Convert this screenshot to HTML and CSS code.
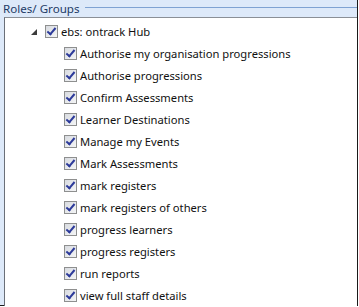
FILE: index.html
```html
<!DOCTYPE html>
<html lang="en">
<head>
  <meta charset="UTF-8">
  <title>Roles/ Groups</title>
  <link rel="stylesheet" href="styles.css">
</head>
<body>

<div class="group">
  <div class="group-head">
    <span class="group-title">Roles/ Groups</span>
    <span class="group-line"></span>
  </div>
  <div class="group-body">
    <ul class="tree">
      <li class="node parent">
        <span class="expander"></span>
        <span class="check"></span>
        <span class="label">ebs: ontrack Hub</span>
      </li>
      <li class="node"><span class="check"></span><span class="label">Authorise my organisation progressions</span></li>
      <li class="node"><span class="check"></span><span class="label">Authorise progressions</span></li>
      <li class="node"><span class="check"></span><span class="label">Confirm Assessments</span></li>
      <li class="node"><span class="check"></span><span class="label">Learner Destinations</span></li>
      <li class="node"><span class="check"></span><span class="label">Manage my Events</span></li>
      <li class="node"><span class="check"></span><span class="label">Mark Assessments</span></li>
      <li class="node"><span class="check"></span><span class="label">mark registers</span></li>
      <li class="node"><span class="check"></span><span class="label">mark registers of others</span></li>
      <li class="node"><span class="check"></span><span class="label">progress learners</span></li>
      <li class="node"><span class="check"></span><span class="label">progress registers</span></li>
      <li class="node"><span class="check"></span><span class="label">run reports</span></li>
      <li class="node"><span class="check"></span><span class="label">view full staff details</span></li>
    </ul>
  </div>
</div>

</body>
</html>
```

FILE: styles.css
```css
html, body { margin: 0; padding: 0; }
body {
  width: 359px; height: 307px; overflow: hidden;
  font-family: "Noto Sans", "Open Sans", sans-serif; font-size: 11.2px; color: #111;
}
.group {
  box-sizing: border-box; width: 358px; height: 306px;
  background: #dde9f9; border-right: 1px solid #1a1a1a; border-bottom: 1px solid #1a1a1a;
  display: flex; flex-direction: column;
}
.group-head { height: 19px; display: flex; align-items: flex-start; }
.group-title { padding: 1px 0 0 3px; color: #1e3b66; font-size: 11.6px; line-height: 16px; }
.group-line { flex: 1; height: 1px; background: #7fa2d2; margin: 7px 0 0 5px; }
.group-body {
  flex: 1; background: #fff; margin-left: 4px;
  border-left: 1px solid #6a6f78; border-top: 1px solid #8a8f96;
}
.tree { list-style: none; margin: 0; padding: 2px 0 0 0; }
.node { height: 22px; display: flex; align-items: center; padding-left: 59px; }
.node.parent { padding-left: 26px; }
.expander {
  width: 0; height: 0; margin-right: 8px; margin-top: 1px;
  border-left: 6px solid transparent; border-bottom: 6px solid #3c3c3c;
}
.check {
  box-sizing: border-box; width: 13px; height: 13px; margin-right: 3px;
  border: 1px solid #8e8f8f;
  background: linear-gradient(135deg, #d8dbe0, #f4f5f6);
  position: relative;
}
.check::after {
  content: ""; position: absolute; left: 3px; top: 0px;
  width: 3px; height: 7px;
  border-right: 2px solid #2c3a9a; border-bottom: 2px solid #2c3a9a;
  transform: rotate(40deg);
}
.label { white-space: nowrap; }
```
